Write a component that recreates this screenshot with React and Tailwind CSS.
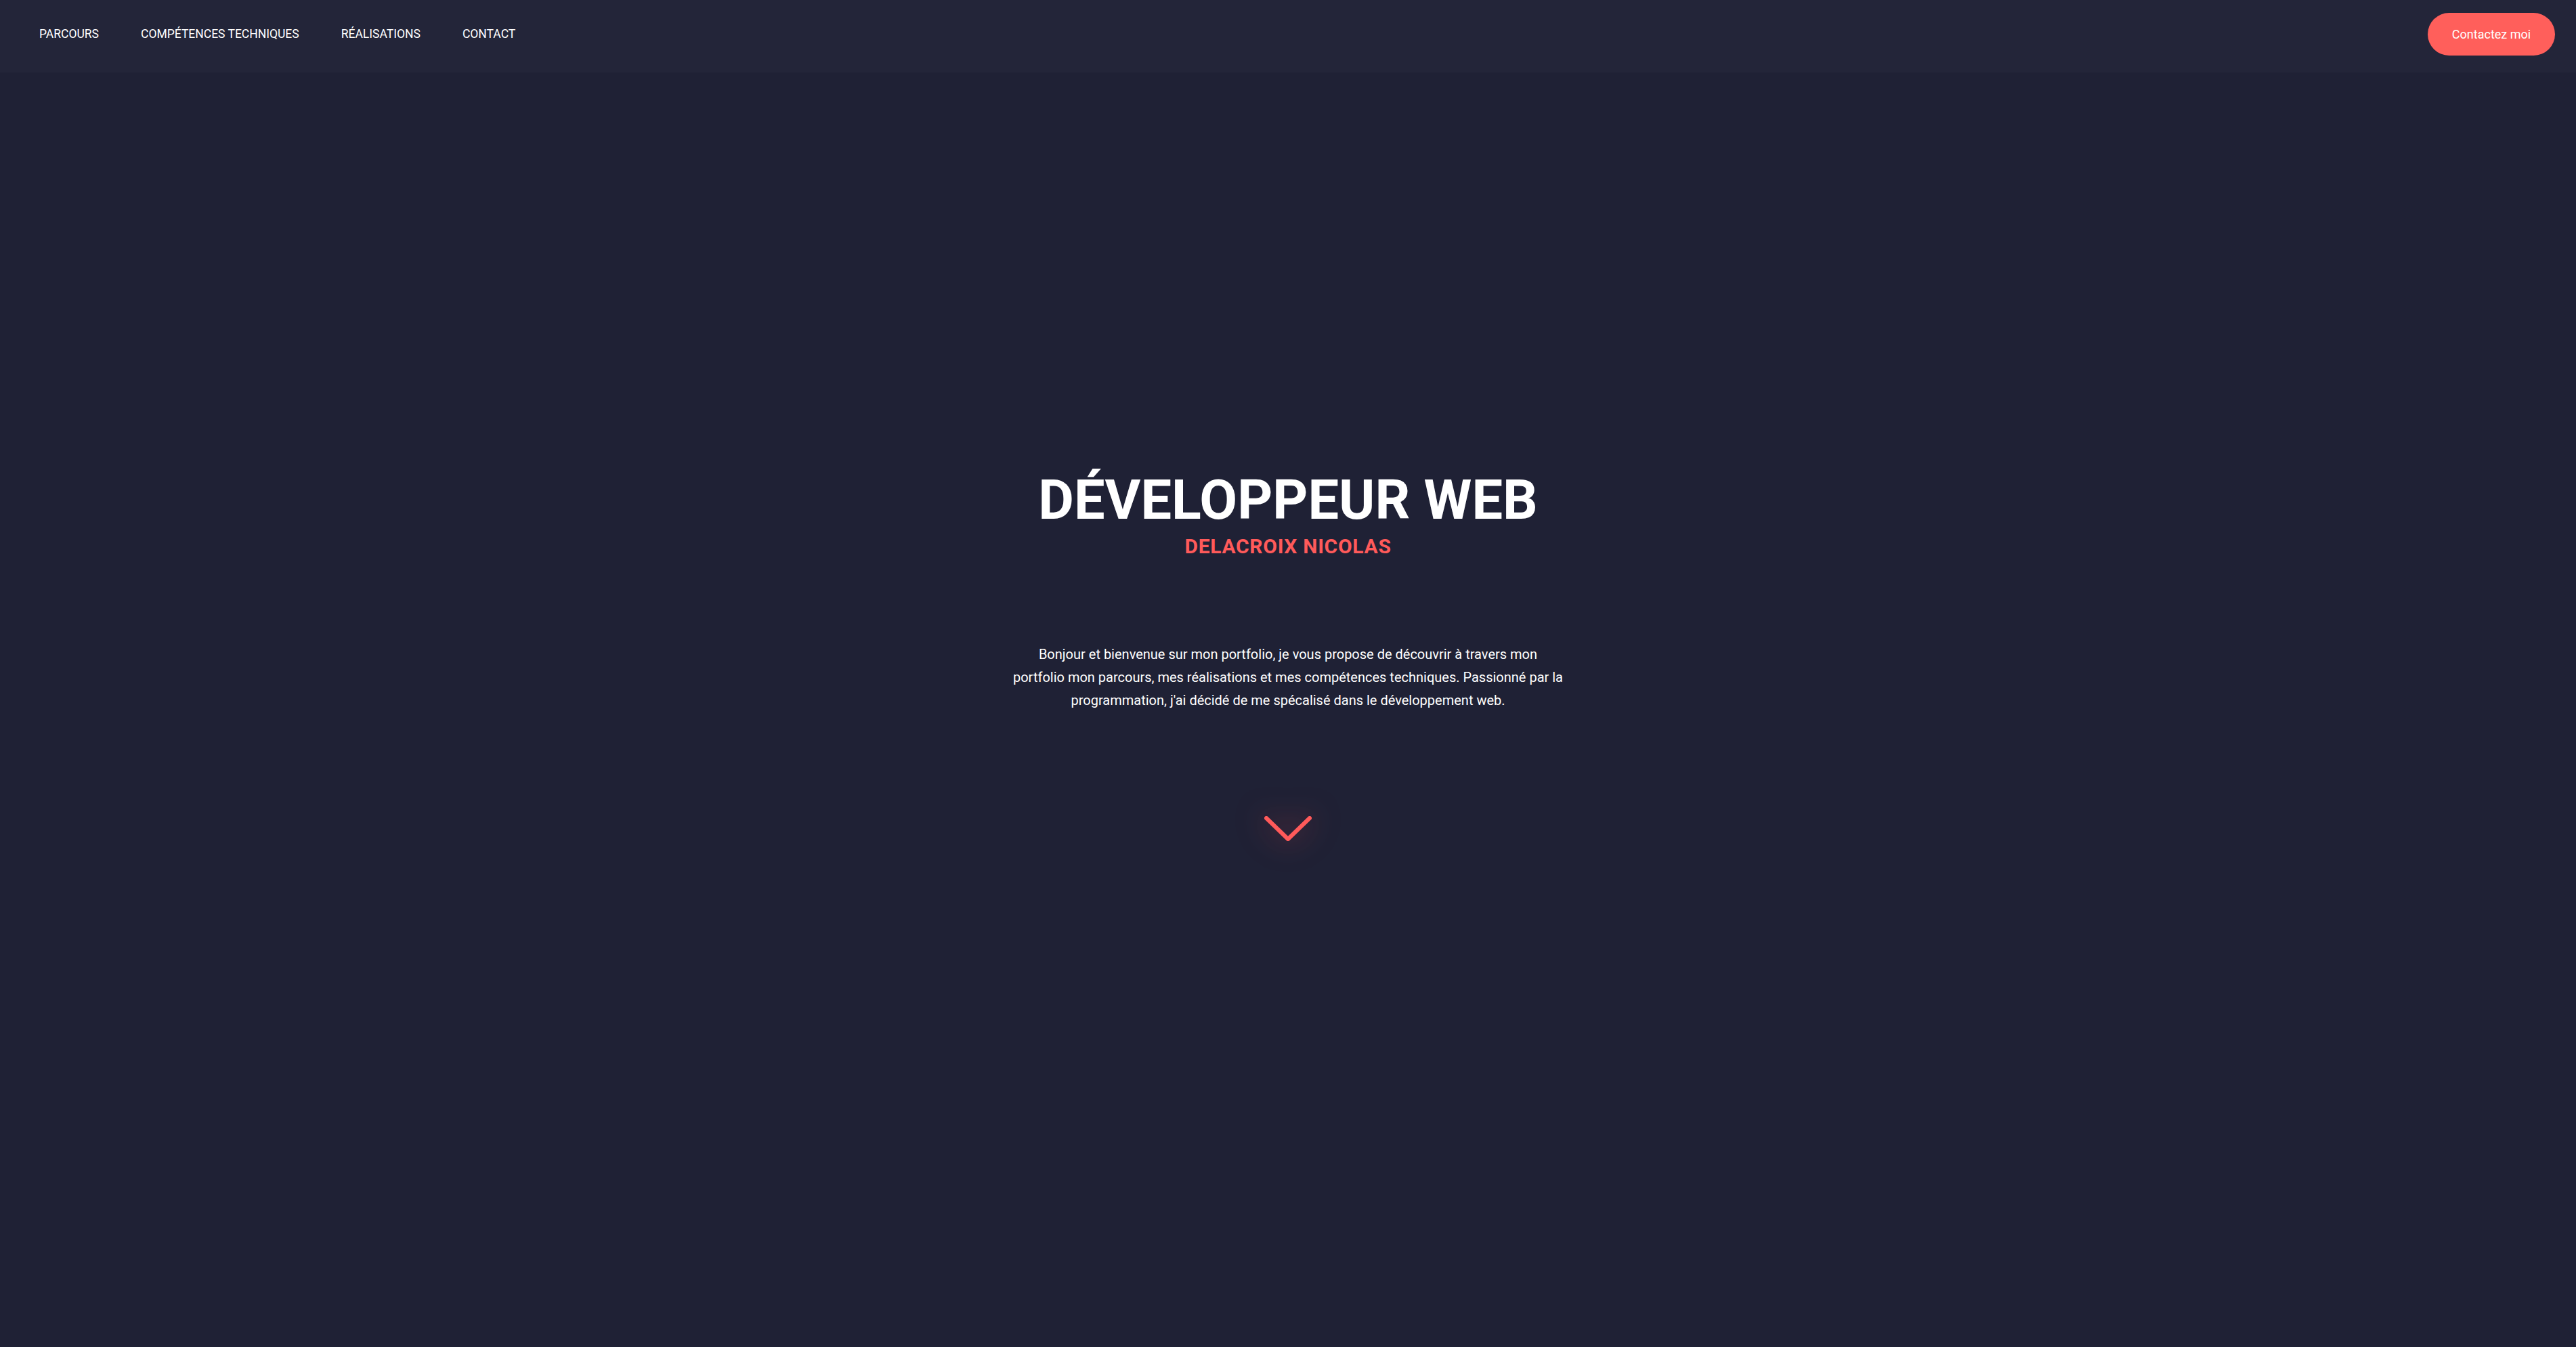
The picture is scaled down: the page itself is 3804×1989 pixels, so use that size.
export default function App() {
  const links = ["PARCOURS", "COMPÉTENCES TECHNIQUES", "RÉALISATIONS", "CONTACT"];

  return (
    <div
      className="min-h-screen w-full bg-[#1f2135] text-white"
      style={{ fontFamily: "Roboto, 'Noto Sans', sans-serif" }}
    >
      <nav className="flex items-center justify-between bg-[#232539] pl-[58px] pr-[31px] pt-[19px] pb-[25px]">
        <ul className="flex items-center gap-[62px]">
          {links.map((link) => (
            <li key={link}>
              <a href="#" className="text-[17.5px] leading-none text-white">
                {link}
              </a>
            </li>
          ))}
        </ul>
        <button className="h-[63px] w-[188px] rounded-full bg-[#ff5f5b] text-[18px] text-white">
          Contactez moi
        </button>
      </nav>

      <main className="flex flex-col items-center pt-[591px] pb-[200px]">
        <h1 className="text-[81px] font-bold leading-none text-white">
          DÉVELOPPEUR WEB
        </h1>
        <h2 className="mt-[13px] text-[30px] font-bold leading-none tracking-[0.7px] text-[#ff5a5a]">
          DELACROIX NICOLAS
        </h2>
        <p className="mt-[127px] w-[816px] text-center text-[20px] leading-[34px] text-white">
          Bonjour et bienvenue sur mon portfolio, je vous propose de découvrir à travers mon
          portfolio mon parcours, mes réalisations et mes compétences techniques. Passionné par la
          programmation, j'ai décidé de me spécalisé dans le développement web.
        </p>
        <a href="#parcours" className="mt-[153px] block">
          <svg
            width="72"
            height="40"
            viewBox="0 0 72 40"
            fill="none"
            className="drop-shadow-[0_0_22px_rgba(255,70,70,0.55)]"
          >
            <polyline
              points="4,4 36,35 68,4"
              stroke="#ff5a5a"
              strokeWidth="6"
              strokeLinecap="round"
              strokeLinejoin="round"
            />
          </svg>
        </a>
      </main>
    </div>
  );
}
